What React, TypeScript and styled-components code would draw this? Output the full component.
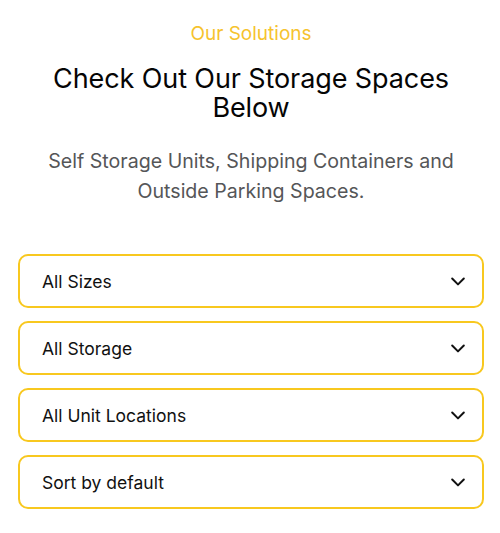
import React from 'react'
import styled, { createGlobalStyle } from 'styled-components'

const GlobalStyle = createGlobalStyle`
  html, body {
    margin: 0;
    padding: 0;
    background: #fff;
  }
  body {
    font-family: Inter, "Noto Sans", sans-serif;
  }
`

const Section = styled.section`
  width: 500px;
  box-sizing: border-box;
  padding: 22px 16px 24px 18px;
  display: flex;
  flex-direction: column;
  align-items: center;
`

const Eyebrow = styled.div`
  color: #f6c32e;
  font-size: 19px;
  line-height: 24px;
  text-align: center;
`

const Heading = styled.h2`
  margin: 18px 0 0;
  color: #050505;
  font-size: 27px;
  font-weight: 400;
  line-height: 29px;
  text-align: center;
  letter-spacing: -0.1px;
`

const Lead = styled.p`
  margin: 24px 0 0;
  color: #555658;
  font-size: 19.6px;
  line-height: 30px;
  text-align: center;
`

const Filters = styled.div`
  margin-top: 48px;
  width: 100%;
  display: flex;
  flex-direction: column;
  gap: 13px;
`

const SelectBox = styled.div`
  height: 54px;
  box-sizing: border-box;
  border: 2px solid #f8c81f;
  border-radius: 10px;
  display: flex;
  align-items: center;
  justify-content: space-between;
  padding: 0 14px 0 22px;
  color: #111;
  font-size: 17.5px;
`

const Chevron = () => (
  <svg width="20" height="20" viewBox="0 0 24 24" fill="none" stroke="#111" strokeWidth="2.4" strokeLinecap="round" strokeLinejoin="round">
    <path d="M5 9l7 7 7-7" />
  </svg>
)

const options = ['All Sizes', 'All Storage', 'All Unit Locations', 'Sort by default']

export default function App() {
  return (
    <>
      <GlobalStyle />
      <Section>
        <Eyebrow>Our Solutions</Eyebrow>
        <Heading>
          Check Out Our Storage Spaces
          <br />
          Below
        </Heading>
        <Lead>
          Self Storage Units, Shipping Containers and
          <br />
          Outside Parking Spaces.
        </Lead>
        <Filters>
          {options.map((o) => (
            <SelectBox key={o}>
              <span>{o}</span>
              <Chevron />
            </SelectBox>
          ))}
        </Filters>
      </Section>
    </>
  )
}
